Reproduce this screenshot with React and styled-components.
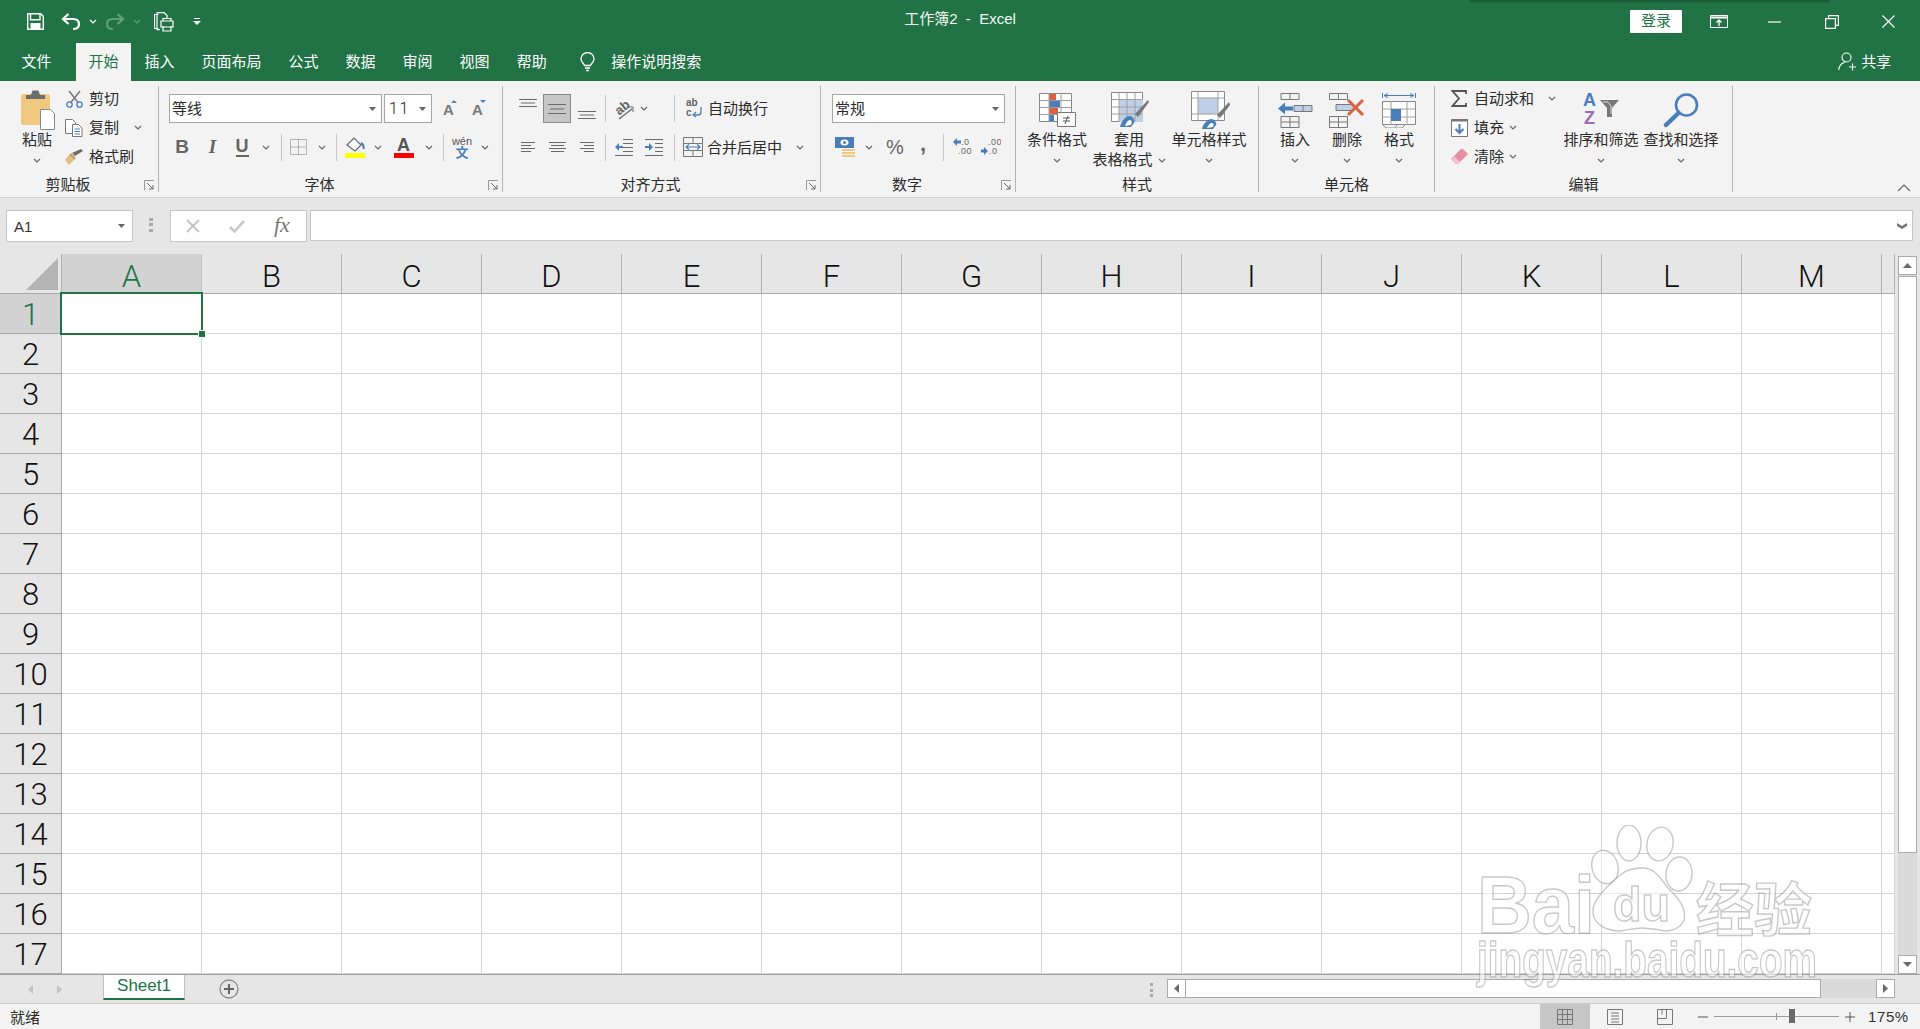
import React from 'react';
import styled, { createGlobalStyle } from 'styled-components';

const GREEN = '#217346';
const LINE = '#d4d4d4';

const Global = createGlobalStyle`
  html,body{margin:0;padding:0;overflow:hidden;}
  body{font-family:"Liberation Sans","Noto Sans CJK SC",sans-serif;font-size:15px;color:#2b2b2b;}
  *{box-sizing:border-box;}
  svg{display:block;}
`;

const Page = styled.div`
  position:relative;
  width:1920px;
  height:1029px;
  display:flex;
  flex-direction:column;
  overflow:hidden;
  background:#e6e6e6;
`;

/* title bar */
const TitleBar = styled.div`
  position:relative;
  height:43px;
  background:${GREEN};
  color:#fff;
  display:flex;
  align-items:center;
`;
const TopShadow = styled.div`
  position:absolute;
  left:1470px;
  top:0;
  width:360px;
  height:4px;
  background:linear-gradient(rgba(0,0,0,.28),rgba(0,0,0,0));
`;
const TitleText = styled.div`
  position:absolute;
  left:0;
  right:0;
  top:9px;
  text-align:center;
  line-height:20px;
  font-size:15px;
  color:#f2f7f4;
  white-space:pre;
`;
const Login = styled.div`
  width:52px;
  height:23px;
  margin-left:${p=>p.$ml}px;
  background:#fff;
  color:${GREEN};
  border-radius:1px;
  text-align:center;
  line-height:22px;
`;

/* tab strip */
const TabRow = styled.div`
  height:38px;
  background:${GREEN};
  color:#fff;
  display:flex;
  padding-left:8px;
`;
const Tab = styled.div`
  padding:0 ${p=>p.$pad||13.5}px;
  margin-right:${p=>p.$mr||0}px;
  line-height:37px;
  white-space:nowrap;
  background:${p=>p.$active?'#f3f3f3':'transparent'};
  color:${p=>p.$active?GREEN:'#fff'};
`;
const TabSearch = styled.div`
  margin-left:${p=>p.$ml}px;
  line-height:37px;
`;

/* ribbon */
const Ribbon = styled.div`
  height:117px;
  background:#f3f3f3;
  border-bottom:1px solid #d0d0d0;
  padding-top:5px;
  display:flex;
  align-items:flex-start;
  position:relative;
`;
const Group = styled.div`
  position:relative;
  width:${p=>p.$w}px;
  height:106px;
  padding-left:${p=>p.$pl||0}px;
  border-right:1px solid #b4b4b4;
  display:flex;
  flex-direction:column;
`;
const GroupBody = styled.div`
  flex:1;
  min-height:0;
  display:flex;
  flex-direction:${p=>p.$col?'column':'row'};
  align-items:flex-start;
`;
const GroupLabel = styled.div`
  height:16px;
  line-height:18px;
  margin-left:${p=>-(p.$pl||0)}px;
  padding-right:${p=>p.$launcher?22:0}px;
  text-align:center;
  white-space:nowrap;
`;
const Launcher = styled.div`
  position:absolute;
  right:3px;
  bottom:1px;
`;
const Collapse = styled.div`
  position:absolute;
  right:9px;
  bottom:5px;
`;
const Big = styled.div`
  width:${p=>p.$w}px;
  margin-left:${p=>p.$ml||0}px;
  display:flex;
  flex-direction:column;
  align-items:center;
  white-space:nowrap;
`;
const BigIcon = styled.div`
  height:40px;
  margin-top:4px;
  margin-left:${p=>p.$ml||0}px;
  display:flex;
  align-items:center;
  justify-content:center;
`;
const BigLine = styled.div`
  height:20px;
  line-height:20px;
  display:flex;
  align-items:center;
  justify-content:center;
  gap:${p=>p.$gap||0}px;
`;
const Stack = styled.div`
  width:${p=>p.$w}px;
  margin-top:-2px;
  display:flex;
  flex-direction:column;
`;
const SmallRow = styled.div`
  height:29px;
  display:flex;
  align-items:center;
  white-space:nowrap;
`;
const ToolRow = styled.div`
  height:${p=>p.$h||30}px;
  margin-top:${p=>p.$mt||0}px;
  display:flex;
  align-items:center;
  white-space:nowrap;
`;
const Slot = styled.div`
  width:${p=>p.$w}px;
  height:${p=>p.$h||24}px;
  flex:none;
  margin-left:${p=>p.$ml||0}px;
  display:flex;
  align-items:center;
  justify-content:center;
  background:${p=>p.$on?'#c6c6c6':'transparent'};
  border:${p=>p.$on?'1px solid #8a8a8a':'none'};
`;
const Nudge = styled.span`
  transform:translateY(${p=>p.$y}px);
`;
const Label = styled.span`
  margin-left:${p=>p.$ml||0}px;
  margin-top:-2px;
`;
const Sep = styled.div`
  width:1px;
  height:27px;
  flex:none;
  margin-left:${p=>p.$ml||0}px;
  background:#c8c8c8;
`;
const Combo = styled.div`
  width:${p=>p.$w}px;
  height:29px;
  margin-left:${p=>p.$ml||0}px;
  flex:none;
  background:#fff;
  border:1px solid #a6a6a6;
  padding:0 5px 0 2px;
  display:flex;
  align-items:center;
  justify-content:space-between;
`;
const ComboText = styled.span`
  margin-top:-2px;
`;
const SizeText = styled.span`
  font-family:Roboto,sans-serif;
  font-weight:300;
  font-size:16px;
  letter-spacing:1.5px;
  color:#222;
  margin-left:2px;
`;

/* formula bar */
const FormulaBar = styled.div`
  height:56px;
  padding:12px 7px 0 6px;
  display:flex;
  align-items:flex-start;
  background:#e6e6e6;
`;
const NameBox = styled.div`
  width:127px;
  height:32px;
  background:#fff;
  border:1px solid #c6c6c6;
  padding:0 7px 0 7px;
  display:flex;
  align-items:center;
  justify-content:space-between;
  font-size:15px;
  color:#333;
`;
const Grip = styled.div`
  margin:8px 0 0 ${p=>p.$ml}px;
  flex:none;
  width:${p=>p.$w||4}px;
  height:14px;
  background:repeating-linear-gradient(#a8a8a8 0 3px,transparent 3px 5.5px);
`;
const FxBox = styled.div`
  width:137px;
  height:32px;
  margin-left:17px;
  background:#fff;
  border:1px solid #c6c6c6;
  display:flex;
  align-items:center;
  padding-left:15px;
  gap:29px;
`;
const FxText = styled.span`
  font-family:"Liberation Serif",serif;
  font-style:italic;
  font-size:22px;
  color:#777;
  margin-top:-2px;
`;
const FormulaInput = styled.div`
  flex:1;
  height:31px;
  margin-left:3px;
  background:#fff;
  border:1px solid #c6c6c6;
  display:flex;
  align-items:center;
  justify-content:flex-end;
  padding-right:5px;
`;

/* sheet */
const SheetArea = styled.div`
  position:relative;
  height:720px;
  display:flex;
`;
const Grid = styled.div`
  width:1895px;
  display:grid;
  grid-template-columns:62px repeat(13,140px) 13px;
  grid-auto-rows:40px;
  background:#fff;
  border-right:1px solid #9f9f9f;
`;
const Corner = styled.div`
  background:#e6e6e6;
  border-right:1px solid #b1b1b1;
  border-bottom:1px solid #ababab;
  padding:4px 0 0 26px;
`;
const ColHead = styled.div`
  background:${p=>p.$on?'#d2d2d2':'#e6e6e6'};
  color:${p=>p.$on?GREEN:'#111'};
  border-right:1px solid ${p=>p.$on?'#c4c4c4':'#b1b1b1'};
  border-bottom:1px solid #ababab;
  font-family:Roboto,sans-serif;
  font-weight:300;
  font-size:31px;
  line-height:45px;
  text-align:center;
`;
const RowHead = styled.div`
  background:${p=>p.$on?'#d2d2d2':'#e6e6e6'};
  color:${p=>p.$on?GREEN:'#111'};
  border-right:1px solid #ababab;
  border-bottom:1px solid #ababab;
  font-family:Roboto,sans-serif;
  font-weight:300;
  font-size:31px;
  line-height:41px;
  text-align:center;
`;
const Cell = styled.div`
  border-right:1px solid ${LINE};
  border-bottom:1px solid ${LINE};
`;
const Selection = styled.div`
  position:absolute;
  left:60px;
  top:38px;
  width:143px;
  height:43px;
  border:2px solid ${GREEN};
`;
const Handle = styled.div`
  position:absolute;
  right:-4px;
  bottom:-4px;
  width:6px;
  height:6px;
  background:${GREEN};
  outline:1px solid #fff;
`;
const VScroll = styled.div`
  width:19px;
  height:718px;
  margin:2px 0 0 3px;
  background:#dadada;
  display:flex;
  flex-direction:column;
`;
const ScrollBtn = styled.div`
  flex:none;
  width:19px;
  height:19px;
  background:#fff;
  border:1px solid #ababab;
  display:flex;
  align-items:center;
  justify-content:center;
`;
const VThumb = styled.div`
  height:577px;
  margin-top:1px;
  background:#fff;
  border:1px solid #ababab;
`;
const VGap = styled.div`
  flex:1;
`;

/* sheet tabs */
const SheetRow = styled.div`
  height:29px;
  background:#e6e6e6;
  border-top:1px solid #9f9f9f;
  display:flex;
  align-items:flex-start;
`;
const SheetTab = styled.div`
  width:82px;
  height:25px;
  margin-left:40px;
  background:#fff;
  border:1px solid #c0c0c0;
  border-top:none;
  border-bottom:2px solid ${GREEN};
  color:${GREEN};
  text-align:center;
  font-family:"Liberation Sans",sans-serif;
  font-size:17px;
  line-height:22px;
`;
const HScroll = styled.div`
  width:728px;
  height:19px;
  margin:4px 0 0 0;
  background:#dadada;
  display:flex;
  justify-content:space-between;
`;
const HThumb = styled.div`
  flex:1;
  margin-right:55px;
  background:#fff;
  border:1px solid #ababab;
  border-left:none;
`;

/* status bar */
const StatusBar = styled.div`
  height:26px;
  background:#f3f3f3;
  border-top:1px solid #c9c9c9;
  display:flex;
  align-items:center;
  padding-left:10px;
`;
const ViewBtn = styled.div`
  width:50px;
  height:26px;
  margin-left:${p=>p.$ml||0}px;
  background:${p=>p.$on?'#c6c6c6':'transparent'};
  display:flex;
  align-items:center;
  justify-content:center;
`;
const ZoomTrack = styled.div`
  position:relative;
  width:125px;
  height:1px;
  margin-left:6px;
  background:#9a9a9a;
`;
const ZoomTick = styled.div`
  position:absolute;
  left:62px;
  top:-3px;
  width:1px;
  height:7px;
  background:#9a9a9a;
`;
const ZoomKnob = styled.div`
  position:absolute;
  left:75px;
  top:-7px;
  width:6px;
  height:14px;
  background:#6a6a6a;
`;
const ZoomText = styled.div`
  margin-left:13px;
  font-family:"Liberation Sans",sans-serif;
  font-size:15px;
  letter-spacing:.6px;
  color:#333;
`;
const Watermark = styled.svg`
  position:absolute;
  left:1470px;
  top:825px;
  pointer-events:none;
`;

/* icons */
const Chev = ({c='#666'}) => <svg width="8" height="5"><path d="M1 1l3 3 3-3" fill="none" stroke={c} strokeWidth="1.2"/></svg>;
const Drop = () => <svg width="7" height="4"><path d="M0 0h7L3.5 4z" fill="#666"/></svg>;
const Launch = () => <svg width="11" height="11"><path d="M.5 10V.5H10" fill="none" stroke="#999"/><path d="M3 3l6 6M9 5v4H5" fill="none" stroke="#666"/></svg>;
const SaveIc = () => <svg width="17" height="17"><path d="M.7.7h13l2.6 2.6v13H.7z" fill="none" stroke="#fff" strokeWidth="1.4"/><path d="M3.500.7v6h9.500v-6" fill="none" stroke="#fff" strokeWidth="1.4"/><path d="M3.500 16v-6h10v6M7 12h3v4H7z" fill="#fff"/></svg>;
const UndoIc = () => <svg width="20" height="18"><path d="M2 6h10c4 0 6 2 6 5s-2 5-6 5" fill="none" stroke="#fff" strokeWidth="2.2"/><path d="M7.500 1L2 6l5.500 5" fill="none" stroke="#fff" strokeWidth="2.2"/></svg>;
const RedoIc = () => <svg width="20" height="18" opacity=".3"><path d="M18 6H8C4 6 2 8 2 11s2 5 6 5" fill="none" stroke="#fff" strokeWidth="2.2"/><path d="M12.500 1L18 6l-5.500 5" fill="none" stroke="#fff" strokeWidth="2.200"/></svg>;
const PrintIc = () => <svg width="20" height="20" fill="none" stroke="#fff" strokeWidth="1.200"><path d="M4.500 2.500h-4v14h4"/><path d="M3 .6h7l3 3v3M3 .6v17h3"/><path d="M7 9h12v6H7zM9 9V6.500h8V9M9 14v5h8v-5"/></svg>;
const Custom = () => <svg width="8" height="9" fill="#fff"><path d="M1 1h6v1H1z"/><path d="M0 4h8L4 8z"/></svg>;
const RibbonMode = () => <svg width="18" height="13" fill="none" stroke="#fff"><path d="M.5.500h17v12H.5z"/><path d="M.5 2.500h17" strokeWidth="2"/><path d="M9 11V5M6.500 7.500L9 5l2.500 2.500" strokeWidth="1.300"/></svg>;
const Min = () => <svg width="13" height="2"><path d="M0 1h13" stroke="#fff" strokeWidth="1.2"/></svg>;
const Restore = () => <svg width="14" height="14" fill="none" stroke="#fff" strokeWidth="1.2"><path d="M.6 3.600h9.800v9.800H.6zM3.600 3.500V.6h9.800v9.800h-3"/></svg>;
const Close = () => <svg width="13" height="13"><path d="M.5.5l12 12M12.500.5l-12 12" stroke="#fff" strokeWidth="1.200"/></svg>;
const Bulb = () => <svg width="15" height="20" fill="none" stroke="#fff" strokeWidth="1.300"><path d="M4.500 13.500C3.500 11 1 10 1 7a6.500 6.500 0 0113 0c0 3-2.500 4-3.500 6.500z"/><path d="M5 16h5M6 18.500h3"/></svg>;
const Person = () => <svg width="20" height="19" fill="none" stroke="#fff" strokeWidth="1.100"><circle cx="8.500" cy="5.500" r="4.500"/><path d="M.7 18c.5-4 3-7 6-7.500"/><path d="M14.500 11.500v7M11 15h7"/></svg>;

const Paste = () => <svg width="38" height="40"><path d="M4 4h25a2 2 0 012 2v29H4a2 2 0 01-2-2V6a2 2 0 012-2z" fill="#f0c87f"/><path d="M7 9V5h5l1.500-4.500h6L21 5h5v4z" fill="#6d6d6d"/><path d="M21.500 19.500h10l4 4v16h-14z" fill="#fff" stroke="#8a8a8a"/></svg>;
const Scissors = () => <svg width="17" height="18" fill="none"><path d="M3 1l9.500 12M14 1L4.500 13" stroke="#777" strokeWidth="1.500"/><circle cx="3.500" cy="14.500" r="2.700" stroke="#4a7ebb" strokeWidth="1.300"/><circle cx="13.500" cy="14.500" r="2.700" stroke="#4a7ebb" strokeWidth="1.300"/></svg>;
const CopyIc = () => <svg width="18" height="18" fill="#fff" stroke="#777"><path d="M.5.500h7l3 3v11h-10z"/><path d="M7.500 5.500h6l3.500 3.500v8.500H7.500z"/><path d="M9.500 10h5.500M9.500 12.500h5.500M9.500 15h5.500" stroke="#4a7ebb"/></svg>;
const BrushIc = () => <svg width="18" height="16"><path d="M0 11l4-5 5 5-5 5z" fill="#e3bd84"/><path d="M4 6l5 5 2-2-5-5z" fill="#c8a163"/><path d="M7 4l3 3 8-5-2-2z" fill="#6d6d6d"/></svg>;
const FontStep = ({up}) => <svg width="18" height="22"><text x={up?2:3} y="17" fontFamily="Liberation Sans" fontSize="15" fill="#777" fontWeight="700">A</text><path d={up?'M10 5l3-3 3 3z':'M11 2h6l-3 3z'} fill={up?'#777':'#4a7ebb'}/></svg>;
const Glyph = styled.span`
  font-family:${p=>p.$serif?'"Liberation Serif",serif':'"Liberation Sans",sans-serif'};
  font-weight:${p=>p.$thin?400:700};
  font-style:${p=>p.$i?'italic':'normal'};
  font-size:${p=>p.$s||18}px;
  color:${p=>p.$c||'#666'};
  border-bottom:${p=>p.$u?'2px solid #666':'none'};
  line-height:${p=>p.$u?'18px':'normal'};
  margin-top:${p=>p.$mt||0}px;
`;
const BorderIc = () => <svg width="17" height="16" fill="none" stroke="#777" strokeDasharray="1 1"><path d="M.5.500h16v15H.5zM8.500.5v15M.5 8h16"/></svg>;
const FillIc = () => <svg width="20" height="22"><path d="M2 9l7-7 7 7-6 6z" fill="#fff" stroke="#666" strokeWidth="1.200"/><path d="M16 7c2 1 3 3 2.500 6" fill="none" stroke="#4a7ebb" strokeWidth="2"/><path d="M0 17h20v5H0z" fill="#ff0"/></svg>;
const ColorIc = () => <svg width="20" height="22"><text x="3" y="15" fontFamily="Liberation Sans" fontWeight="700" fontSize="18" fill="#555">A</text><path d="M0 17h20v5H0z" fill="#f00"/></svg>;
const PhoneticLabel = styled.div`
  display:flex;
  flex-direction:column;
  align-items:center;
  font-size:11px;
  line-height:10px;
  color:#555;
  span{color:#4a7ebb;font-size:13px;line-height:13px;font-weight:700;}
`;
const Lines = ({w=18,rows=3,align='c',gap=4}) => {
  const arr = Array.from({length:rows});
  return <svg width={w} height={(rows-1)*gap+1} stroke="#6a6a6a">{arr.map((_,i)=>{
    const short = i%2===1 ? 4 : 0;
    const x1 = align==='r' ? short : align==='c' ? short/2 : 0;
    const x2 = align==='l' ? w-short : align==='c' ? w-short/2 : w;
    return <path key={i} d={`M${x1} ${i*gap+.5}H${x2}`}/>;
  })}</svg>;
};
const OrientIc = () => <svg width="26" height="26"><text x="5" y="15" transform="rotate(-40 13 13)" fontFamily="Liberation Sans" fontSize="13" fontWeight="700" fill="#666">ab</text><path d="M8 23L21 13" stroke="#666" strokeWidth="1.200"/><path d="M16 11h6v5" fill="none" stroke="#666"/></svg>;
const IndentIc = ({dir}) => <svg width="18" height="17" stroke="#6a6a6a"><path d={dir<0?'M8 .5h10M8 4.500h10M8 8.500h10M8 12.500h10M0 16.500h18':'M0 .5h18M10 4.500h8M10 8.500h8M10 12.500h8M0 16.500h18'}/><path d={dir<0?'M0 8l4-4v3h4v2H4v3z':'M8 8L4 4v3H0v2h4v3z'} fill="#4a7ebb" stroke="none"/></svg>;
const WrapIc = () => <svg width="16" height="21"><text x="0" y="8" fontFamily="Liberation Sans" fontWeight="700" fontSize="10" fill="#666">ab</text><text x="0" y="18" fontFamily="Liberation Sans" fontWeight="700" fontSize="10" fill="#666">c</text><path d="M15 9v5c0 2-1 3-3 3H8" fill="none" stroke="#4a7ebb" strokeWidth="1.300"/><path d="M10 14l-3 3 3 2" fill="none" stroke="#4a7ebb" strokeWidth="1.200"/></svg>;
const MergeIc = () => <svg width="20" height="20" fill="none"><path d="M.5.500h19v19H.5zM.5 6.500h19M.5 13.500h19M10 .5v6M10 13.500v6" stroke="#777"/><path d="M3 10h14M6 7.500L3 10l3 2.500M14 7.500l3 2.500-3 2.500" stroke="#4a7ebb" strokeWidth="1.200"/></svg>;
const CurrencyIc = () => <svg width="20" height="20"><path d="M0 0h19v11H0z" fill="#4a7ebb"/><ellipse cx="9.500" cy="5.500" rx="4" ry="3" fill="#fff"/><circle cx="9.500" cy="5.500" r="1.500" fill="#4a7ebb"/><path d="M7 12h13v2H7zM7 15h13v2H7zM7 18h13v2H7z" fill="#f0c87f"/></svg>;
const DecIc = ({more}) => <svg width="20" height="19"><text x={more?8:7} y="7" fontFamily="Liberation Sans" fontSize="9" fill="#666" letterSpacing=".5">{more?'.0':'.00'}</text><text x={more?5:8} y="16" fontFamily="Liberation Sans" fontSize="9" fill="#666" letterSpacing=".5">{more?'.00':'.0'}</text>
  {more?<path d="M0 4l4-4v2.500h4v3H4V8z" fill="#4a7ebb"/>:<path d="M7 13L3 9v2.500H0v3h3V17z" fill="#4a7ebb"/>}</svg>;

const CondIc = () => <svg width="38" height="34" fill="none"><path d="M.5.500h32v28H.5z" fill="#fff" stroke="#888"/><path d="M10 1h7v6h-7z" fill="#dc6140"/><path d="M10 8h11v6H10z" fill="#4a7ebb"/><path d="M10 15h9v6h-9z" fill="#dc6140"/><path d="M10 22h5v6h-5z" fill="#4a7ebb"/><path d="M.5 7.500h32M.5 14.500h32M.5 21.500h32M10 .5v28M22 .5v28" stroke="#a0a0a0"/><path d="M18.500 19.500h18v14h-18z" fill="#fff" stroke="#777"/><path d="M24 25h7M24 28h7M26 31l3-8" stroke="#555"/></svg>;
const TableIc = () => <svg width="38" height="36" fill="none"><path d="M.5.500h31v29H.5z" fill="#fff" stroke="#888"/><path d="M8 7h24v23H8z" fill="#bed0e6"/><path d="M.5 7.500h31M.5 15h31M.5 22h31M8 .5v29M16 .5v29M24 .5v29" stroke="#a0a0a0"/><path d="M24 22L37 8l1 2-11 15z" fill="#777"/><path d="M9 35c1-5 5-11 10-11 4 1 5 5 4 7l-3 4z" fill="#4a7ebb"/><path d="M14 34c1-3 3-6 5-6s2 3 1 5z" fill="#fff"/></svg>;
const CellStyleIc = () => <svg width="39" height="38" fill="none"><path d="M.5.500h33v29H.5z" fill="#fff" stroke="#888"/><path d="M7 7h20v16H7z" fill="#bed0e6"/><path d="M.5 7h33M.5 23h33M7 .5v29M27 .5v29" stroke="#a0a0a0"/><path d="M26 24l12-13 1 3-10 13z" fill="#777"/><path d="M11 38c1-5 5-10 10-10 3 1 5 4 4 6l-3 4z" fill="#4a7ebb"/><path d="M16 37c1-3 3-5 5-5s2 2 1 4z" fill="#fff"/></svg>;
const InsertIc = () => <svg width="36" height="35" fill="none" stroke="#777"><path d="M4 .5h18v6H4zM13 .5v6M4 23.500h18v11H4zM4 29h18M13 23.500v11"/><path d="M17 12.500h18v6H17zM26 12.500v6" fill="#bed0e6"/><path d="M1 15.500l7-6v4h8v4H8v4z" fill="#4a7ebb" stroke="none"/></svg>;
const DeleteIc = () => <svg width="36" height="35" fill="none" stroke="#777"><path d="M.5.500h18v6H.5zM9.500.5v6M.5 23.500h18v11H.5zM.5 29h18M9.500 23.500v11"/><path d="M7 11.500h18v6H7z" fill="#bed0e6"/><path d="M19 7l15 15M34 7L19 22" stroke="#dc6140" strokeWidth="3"/></svg>;
const FormatIc = () => <svg width="34" height="36" fill="none"><path d="M.5 1v5M33.500 1v5M2 3.500h30M6 1.500L2 3.500l4 2M28 1.500l4 2-4 2" stroke="#4a7ebb"/><path d="M.5 9.500h33v23H.5z" fill="#fff" stroke="#888"/><path d="M.5 17h33M.5 25h33M9 9.500v23M25 9.500v23" stroke="#a0a0a0"/><path d="M9 17h10v12H9z" fill="#4a7ebb"/><path d="M1 33l3 3h9l2-3M15 36h5l3-3" stroke="#888"/></svg>;
const Sigma = () => <svg width="16" height="17"><path d="M15 4V1H1.500l6.500 7.500L1.500 16H15v-3" fill="none" stroke="#555" strokeWidth="1.800"/></svg>;
const FillDown = () => <svg width="17" height="18" fill="none"><path d="M.5.500h16v17H.5z" fill="#fff" stroke="#777"/><path d="M.5 1.500h16" stroke="#777" strokeWidth="2"/><path d="M8.500 5v9M4.500 10l4 4 4-4" stroke="#4a7ebb" strokeWidth="2"/></svg>;
const Eraser = () => <svg width="17" height="15"><path d="M0 10L10 0h2l5 5L7 15H5z" fill="#ea8ea3"/><path d="M0 10l5 5h2l2-2-5-5z" fill="#f3c3cf"/></svg>;
const SortIc = () => <svg width="36" height="38"><text x="0" y="15" fontFamily="Liberation Sans" fontWeight="700" fontSize="18" fill="#4a7ebb">A</text><text x="1" y="33" fontFamily="Liberation Sans" fontWeight="700" fontSize="18" fill="#9b6bb6">Z</text><path d="M17 9h19l-7 8v9h-5v-9z" fill="#777"/><path d="M20 11h5l3 4v8" fill="none" stroke="#ddd"/></svg>;
const FindIc = () => <svg width="36" height="35" fill="none"><circle cx="23.500" cy="12" r="10.500" stroke="#4a7ebb" strokeWidth="2.600"/><path d="M15.500 20L3 32" stroke="#4a7ebb" strokeWidth="4.500" strokeLinecap="round"/></svg>;
const Triangle = () => <svg width="32" height="32"><path d="M32 0v32H0z" fill="#b4b4b4"/></svg>;
const Arrow = ({d,c='#6a6a6a'}) => {
  const p = {up:'M0 5L4.500 0 9 5z',down:'M0 0h9L4.500 5z',left:'M5 0v9L0 4.500z',right:'M0 0v9l5-4.500z'}[d];
  const hor = d==='left'||d==='right';
  return <svg width={hor?5:9} height={hor?9:5}><path d={p} fill={c}/></svg>;
};
const GridView = () => <svg width="16" height="16" fill="none" stroke="#777"><path d="M.5.500h15v15H.5zM5.500.5v15M10.500.5v15M.5 5.500h15M.5 10.500h15"/></svg>;
const PageView = () => <svg width="16" height="16" fill="none" stroke="#777"><path d="M.5.500h15v15H.5zM4 4h8M4 7h8M4 10h8M4 13h8"/></svg>;
const BreakView = () => <svg width="16" height="16" fill="none" stroke="#777"><path d="M.5.500h15v15H.5zM.5 9.500h9v-9M5 .5v5"/></svg>;
const AddSheet = () => <svg width="20" height="20" fill="none"><circle cx="10" cy="10" r="9" stroke="#8a8a8a" strokeWidth="1.300"/><path d="M10 5v10M5 10h10" stroke="#666" strokeWidth="2"/></svg>;
const XIc = () => <svg width="14" height="14"><path d="M1 1l12 12M13 1L1 13" stroke="#c6c6c6" strokeWidth="2"/></svg>;
const CheckIc = () => <svg width="16" height="13"><path d="M1 7l4.500 4.500L15 1" fill="none" stroke="#c6c6c6" strokeWidth="2.500"/></svg>;
const DoubleDown = () => <svg width="10" height="6"><path d="M0 0l5 3 5-3v3L5 6 0 3z" fill="#777"/></svg>;
const CollapseIc = () => <svg width="14" height="8"><path d="M1 7l6-6 6 6" fill="none" stroke="#666" strokeWidth="1.100"/></svg>;
const Minus = () => <svg width="10" height="2"><path d="M0 1h10" stroke="#555"/></svg>;
const Plus = () => <svg width="10" height="10"><path d="M0 5h10M5 0v10" stroke="#555"/></svg>;
const DimChev = () => <svg width="8" height="5" opacity=".3"><path d="M1 1l3 3 3-3" fill="none" stroke="#fff" strokeWidth="1.200"/></svg>;

const mark = {fill:'rgba(255,255,255,.55)',stroke:'rgba(110,110,110,.38)',strokeWidth:1.400,fontFamily:'"Liberation Sans","Noto Sans CJK SC",sans-serif'};

const columns = 'ABCDEFGHIJKLM'.split('');
const rows = Array.from({length:17},(_,i)=>i+1);

export default function App(){
  return (
    <Page>
      <Global/>
      <TitleBar>
        <TopShadow/>
        <Slot $w={17} $ml={27}><SaveIc/></Slot>
        <Slot $w={20} $ml={17}><UndoIc/></Slot>
        <Slot $w={8} $ml={8}><Chev c="#fff"/></Slot>
        <Slot $w={20} $ml={8}><RedoIc/></Slot>
        <Slot $w={8} $ml={8}><DimChev/></Slot>
        <Slot $w={20} $ml={13}><PrintIc/></Slot>
        <Slot $w={8} $ml={19}><Custom/></Slot>
        <TitleText>工作簿2  -  Excel</TitleText>
        <Login $ml={1429}>登录</Login>
        <Slot $w={18} $ml={28}><RibbonMode/></Slot>
        <Slot $w={13} $ml={40}><Min/></Slot>
        <Slot $w={14} $ml={44}><Restore/></Slot>
        <Slot $w={13} $ml={43}><Close/></Slot>
      </TitleBar>
      <TabRow>
        <Tab $mr={11}>文件</Tab>
        <Tab $active $pad={12.500}>开始</Tab>
        <Tab>插入</Tab>
        <Tab>页面布局</Tab>
        <Tab>公式</Tab>
        <Tab>数据</Tab>
        <Tab>审阅</Tab>
        <Tab>视图</Tab>
        <Tab>帮助</Tab>
        <Slot $w={15} $h={37} $ml={20}><Bulb/></Slot>
        <TabSearch $ml={16}>操作说明搜索</TabSearch>
        <Slot $w={20} $h={37} $ml={1137}><Person/></Slot>
        <TabSearch $ml={3}>共享</TabSearch>
      </TabRow>
      <Ribbon>
        <Group $w={159}>
          <GroupBody>
            <Big $w={50} $ml={12}>
              <BigIcon $ml={2}><Paste/></BigIcon>
              <BigLine>粘贴</BigLine>
              <BigLine><Chev/></BigLine>
            </Big>
            <Stack $w={90}>
              <SmallRow><Slot $w={24}><Scissors/></Slot><Label $ml={3}>剪切</Label></SmallRow>
              <SmallRow><Slot $w={24}><CopyIc/></Slot><Label $ml={3}>复制</Label><Slot $w={8} $ml={15}><Chev/></Slot></SmallRow>
              <SmallRow><Slot $w={24}><BrushIc/></Slot><Label $ml={3}>格式刷</Label></SmallRow>
            </Stack>
          </GroupBody>
          <GroupLabel $launcher>剪贴板</GroupLabel>
          <Launcher><Launch/></Launcher>
        </Group>
        <Group $w={344} $pl={8}>
          <GroupBody $col>
            <ToolRow $h={29} $mt={8}>
              <Combo $w={213} $ml={2}><ComboText>等线</ComboText><Drop/></Combo>
              <Combo $w={48} $ml={2}><SizeText>11</SizeText><Drop/></Combo>
              <Slot $w={18} $ml={9}><FontStep up/></Slot>
              <Slot $w={18} $ml={10}><FontStep/></Slot>
            </ToolRow>
            <ToolRow $mt={9}>
              <Slot $w={30}><Glyph $s={19}>B</Glyph></Slot>
              <Slot $w={31}><Glyph $s={19} $i $serif>I</Glyph></Slot>
              <Slot $w={28}><Glyph $s={18} $u>U</Glyph></Slot>
              <Slot $w={20}><Chev/></Slot>
              <Sep $ml={5}/>
              <Slot $w={24} $ml={4}><BorderIc/></Slot>
              <Slot $w={8} $ml={8}><Chev/></Slot>
              <Sep $ml={10}/>
              <Slot $w={30} $ml={3}><FillIc/></Slot>
              <Slot $w={16}><Chev/></Slot>
              <Slot $w={32} $ml={2}><ColorIc/></Slot>
              <Slot $w={18}><Chev/></Slot>
              <Sep $ml={5}/>
              <Slot $w={28} $ml={4}><PhoneticLabel>wén<span>文</span></PhoneticLabel></Slot>
              <Slot $w={18}><Chev/></Slot>
            </ToolRow>
          </GroupBody>
          <GroupLabel $pl={8} $launcher>字体</GroupLabel>
          <Launcher><Launch/></Launcher>
        </Group>
        <Group $w={318} $pl={10}>
          <GroupBody $col>
            <ToolRow $h={29} $mt={8}>
              <Slot $w={29}><Nudge $y={-6}><Lines gap={3.500}/></Nudge></Slot>
              <Slot $w={28} $h={29} $ml={1} $on><Lines gap={4.500}/></Slot>
              <Slot $w={30} $ml={1}><Nudge $y={6}><Lines gap={3.500}/></Nudge></Slot>
              <Sep $ml={3}/>
              <Slot $w={30} $ml={3} $h={26}><OrientIc/></Slot>
              <Slot $w={10}><Chev/></Slot>
              <Sep $ml={25}/>
              <Slot $w={16} $ml={11} $h={21}><WrapIc/></Slot>
              <Label $ml={6}>自动换行</Label>
            </ToolRow>
            <ToolRow $mt={9}>
              <Slot $w={29}><Lines w={14} rows={4} align="l" gap={3}/></Slot>
              <Slot $w={29} $ml={1}><Lines w={17} rows={4} gap={3}/></Slot>
              <Slot $w={30}><Lines w={14} rows={4} align="r" gap={3}/></Slot>
              <Sep $ml={3}/>
              <Slot $w={30} $ml={3}><IndentIc dir={-1}/></Slot>
              <Slot $w={30}><IndentIc dir={1}/></Slot>
              <Sep $ml={5}/>
              <Slot $w={20} $ml={8}><MergeIc/></Slot>
              <Label $ml={4}>合并后居中</Label>
              <Slot $w={8} $ml={14}><Chev/></Slot>
            </ToolRow>
          </GroupBody>
          <GroupLabel $pl={10} $launcher>对齐方式</GroupLabel>
          <Launcher><Launch/></Launcher>
        </Group>
        <Group $w={195} $pl={11}>
          <GroupBody $col>
            <ToolRow $h={29} $mt={8}>
              <Combo $w={173}><ComboText>常规</ComboText><Drop/></Combo>
            </ToolRow>
            <ToolRow $mt={9}>
              <Slot $w={20} $ml={3}><CurrencyIc/></Slot>
              <Slot $w={8} $ml={10}><Chev/></Slot>
              <Slot $w={24} $ml={10}><Glyph $s={20} $thin>%</Glyph></Slot>
              <Slot $w={20} $ml={6}><Glyph $s={22} $mt={-6}>,</Glyph></Slot>
              <Sep $ml={10}/>
              <Slot $w={20} $ml={9}><DecIc more/></Slot>
              <Slot $w={20} $ml={8}><DecIc/></Slot>
            </ToolRow>
          </GroupBody>
          <GroupLabel $pl={11} $launcher>数字</GroupLabel>
          <Launcher><Launch/></Launcher>
        </Group>
        <Group $w={243} $pl={9}>
          <GroupBody>
            <Big $w={64}>
              <BigIcon $ml={2}><CondIc/></BigIcon>
              <BigLine>条件格式</BigLine>
              <BigLine><Chev/></BigLine>
            </Big>
            <Big $w={78} $ml={1}>
              <BigIcon $ml={2}><TableIc/></BigIcon>
              <BigLine>套用</BigLine>
              <BigLine $gap={5}>表格格式<Chev/></BigLine>
            </Big>
            <Big $w={80} $ml={1}>
              <BigIcon $ml={2}><CellStyleIc/></BigIcon>
              <BigLine>单元格样式</BigLine>
              <BigLine><Chev/></BigLine>
            </Big>
          </GroupBody>
          <GroupLabel $pl={9}>样式</GroupLabel>
        </Group>
        <Group $w={176} $pl={10}>
          <GroupBody>
            <Big $w={52}>
              <BigIcon><InsertIc/></BigIcon>
              <BigLine>插入</BigLine>
              <BigLine><Chev/></BigLine>
            </Big>
            <Big $w={52}>
              <BigIcon><DeleteIc/></BigIcon>
              <BigLine>删除</BigLine>
              <BigLine><Chev/></BigLine>
            </Big>
            <Big $w={52}>
              <BigIcon><FormatIc/></BigIcon>
              <BigLine>格式</BigLine>
              <BigLine><Chev/></BigLine>
            </Big>
          </GroupBody>
          <GroupLabel $pl={10}>单元格</GroupLabel>
        </Group>
        <Group $w={298} $pl={12}>
          <GroupBody>
            <Stack $w={116}>
              <SmallRow><Slot $w={24}><Sigma/></Slot><Label $ml={3}>自动求和</Label><Slot $w={8} $ml={14}><Chev/></Slot></SmallRow>
              <SmallRow><Slot $w={24}><FillDown/></Slot><Label $ml={3}>填充</Label><Slot $w={8} $ml={5}><Chev/></Slot></SmallRow>
              <SmallRow><Slot $w={24}><Eraser/></Slot><Label $ml={3}>清除</Label><Slot $w={8} $ml={5}><Chev/></Slot></SmallRow>
            </Stack>
            <Big $w={76}>
              <BigIcon><SortIc/></BigIcon>
              <BigLine>排序和筛选</BigLine>
              <BigLine><Chev/></BigLine>
            </Big>
            <Big $w={78} $ml={3}>
              <BigIcon><FindIc/></BigIcon>
              <BigLine>查找和选择</BigLine>
              <BigLine><Chev/></BigLine>
            </Big>
          </GroupBody>
          <GroupLabel $pl={12}>编辑</GroupLabel>
        </Group>
        <Collapse><CollapseIc/></Collapse>
      </Ribbon>
      <FormulaBar>
        <NameBox>A1<Drop/></NameBox>
        <Grip $ml={16}/>
        <FxBox><XIc/><CheckIc/><FxText>fx</FxText></FxBox>
        <FormulaInput><DoubleDown/></FormulaInput>
      </FormulaBar>
      <SheetArea>
        <Grid>
          <Corner><Triangle/></Corner>
          {columns.map(c=><ColHead key={c} $on={c==='A'}>{c}</ColHead>)}
          <ColHead/>
          {rows.map(r=>(
            <React.Fragment key={r}>
              <RowHead $on={r===1}>{r}</RowHead>
              {columns.map(c=><Cell key={c}/>)}
              <Cell/>
            </React.Fragment>
          ))}
        </Grid>
        <Selection><Handle/></Selection>
        <VScroll>
          <ScrollBtn><Arrow d="up"/></ScrollBtn>
          <VThumb/>
          <VGap/>
          <ScrollBtn><Arrow d="down"/></ScrollBtn>
        </VScroll>
      </SheetArea>
      <SheetRow>
        <Slot $w={8} $ml={26} $h={28}><Arrow d="left" c="#c2c2c2"/></Slot>
        <Slot $w={8} $ml={21} $h={28}><Arrow d="right" c="#c2c2c2"/></Slot>
        <SheetTab>Sheet1</SheetTab>
        <Slot $w={20} $ml={34} $h={28}><AddSheet/></Slot>
        <Grip $ml={911} $w={3}/>
        <Slot $w={10} $ml={4} $h={28}/>
        <HScroll>
          <ScrollBtn><Arrow d="left"/></ScrollBtn>
          <HThumb/>
          <ScrollBtn><Arrow d="right"/></ScrollBtn>
        </HScroll>
      </SheetRow>
      <StatusBar>
        就绪
        <ViewBtn $on $ml={1500}><GridView/></ViewBtn>
        <ViewBtn><PageView/></ViewBtn>
        <ViewBtn><BreakView/></ViewBtn>
        <Slot $w={10} $ml={8}><Minus/></Slot>
        <ZoomTrack><ZoomTick/><ZoomKnob/></ZoomTrack>
        <Slot $w={10} $ml={6}><Plus/></Slot>
        <ZoomText>175%</ZoomText>
      </StatusBar>
      <Watermark width="370" height="180" viewBox="0 0 370 180">
        <g filter="url(#soft)">
          <text x="7" y="108" fontSize="82" fontWeight="700" textLength="118" lengthAdjust="spacingAndGlyphs" {...mark}>Bai</text>
          <g {...mark}>
            <ellipse cx="135" cy="42" rx="13" ry="17" transform="rotate(-15 135 42)"/>
            <ellipse cx="159" cy="18" rx="12" ry="18"/>
            <ellipse cx="190" cy="19" rx="13" ry="17" transform="rotate(12 190 19)"/>
            <ellipse cx="209" cy="49" rx="13" ry="17" transform="rotate(5 209 49)"/>
            <path d="M172 43c16 0 20 15 30 24 10 10 14 20 12 28-3 8-14 13-24 10-7-1-13-2-18-2-7 0-14 2-22 3-14 0-26-7-27-18-1-10 7-18 14-26 12-10 16-19 35-19z"/>
          </g>
          <text x="143" y="96" fontSize="48" fontWeight="700" textLength="57" lengthAdjust="spacingAndGlyphs" {...mark}>du</text>
          <text x="226" y="106" fontSize="58" fontWeight="700" {...mark}>经验</text>
          <text x="7" y="152" fontSize="50" fontWeight="700" textLength="340" lengthAdjust="spacingAndGlyphs" {...mark}>jingyan.baidu.com</text>
        </g>
        <defs><filter id="soft"><feGaussianBlur stdDeviation=".5"/></filter></defs>
      </Watermark>
    </Page>
  );
}
